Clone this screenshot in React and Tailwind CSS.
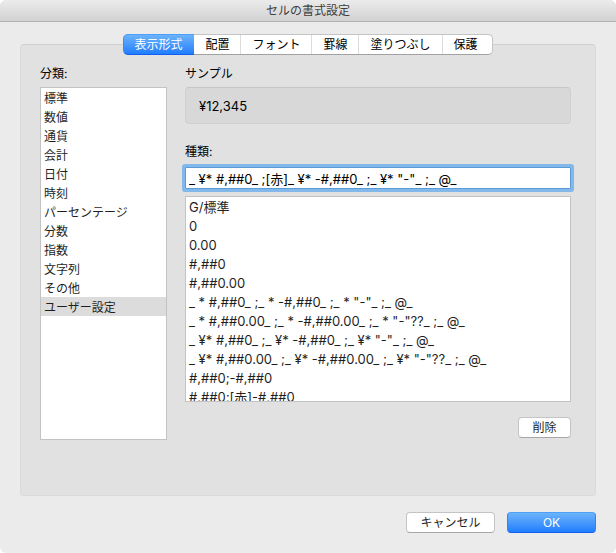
import { useState } from "react";

const TABS = ["表示形式", "配置", "フォント", "罫線", "塗りつぶし", "保護"];

const CATEGORIES = [
  "標準",
  "数値",
  "通貨",
  "会計",
  "日付",
  "時刻",
  "パーセンテージ",
  "分数",
  "指数",
  "文字列",
  "その他",
  "ユーザー設定",
];

const FORMATS = [
  "G/標準",
  "0",
  "0.00",
  "#,##0",
  "#,##0.00",
  '_ * #,##0_ ;_ * -#,##0_ ;_ * "-"_ ;_ @_ ',
  '_ * #,##0.00_ ;_ * -#,##0.00_ ;_ * "-"??_ ;_ @_ ',
  '_ ¥* #,##0_ ;_ ¥* -#,##0_ ;_ ¥* "-"_ ;_ @_ ',
  '_ ¥* #,##0.00_ ;_ ¥* -#,##0.00_ ;_ ¥* "-"??_ ;_ @_ ',
  "#,##0;-#,##0",
  "#,##0;[赤]-#,##0",
];

function TabBar({ active, onSelect }) {
  return (
    <div
      role="tablist"
      aria-label="セルの書式設定"
      className="relative z-10 flex h-[21px] rounded-[5px] border border-[#c4c4c4] border-b-[#a2a2a2] bg-white"
    >
      {TABS.map((tab) => (
        <button
          key={tab}
          type="button"
          role="tab"
          aria-selected={tab === active}
          onClick={() => onSelect(tab)}
          className={
            tab === active
              ? "-my-px -ml-px rounded-l-[5px] border-y border-l border-t-[#4ba0f8] border-b-[#1260f0] border-l-[#3a8cf5] bg-linear-to-b from-[#6cb3fa] to-[#1f7dfe] pr-3 pl-[10px] leading-[19px] text-white"
              : "border-r border-[#dcdcdc] px-[11px] leading-[19px] last:border-r-0 last:pr-[14px]"
          }
        >
          {tab}
        </button>
      ))}
    </div>
  );
}

function ListBox({ labelId, items, selected, onSelect, className }) {
  return (
    <ul
      role="listbox"
      aria-labelledby={labelId}
      className={"overflow-hidden border border-[#c3c3c3] bg-white text-[#1f1f1f] " + className}
    >
      {items.map((item) => (
        <li key={item} role="presentation">
          <button
            type="button"
            role="option"
            aria-selected={item === selected}
            onClick={() => onSelect(item)}
            className={
              "block h-[19px] w-full whitespace-pre pt-px pl-[3px] text-left leading-[19px] " +
              (item === selected ? "bg-[#dcdcdc]" : "")
            }
          >
            {item}
          </button>
        </li>
      ))}
    </ul>
  );
}

function PushButton({ primary, className, children }) {
  return (
    <button
      type="button"
      className={
        "h-[21px] rounded-[4px] border leading-[19px] " +
        (primary
          ? "border-t-[#4ba0f8] border-x-[#2f84f6] border-b-[#1260f0] bg-linear-to-b from-[#6cb3fa] to-[#1f7dfe] text-white "
          : "border-[#c4c4c4] border-b-[#a6a6a6] bg-white text-[#1f1f1f] ") +
        className
      }
    >
      {children}
    </button>
  );
}

export default function App() {
  const [tab, setTab] = useState("表示形式");
  const [category, setCategory] = useState("ユーザー設定");
  const [code, setCode] = useState('_ ¥* #,##0_ ;[赤]_ ¥* -#,##0_ ;_ ¥* "-"_ ;_ @_ ');

  return (
    <div className="bg-white font-[Inter,'Noto_Sans_CJK_JP',sans-serif] text-[12px] leading-[18px] text-black">
      <main className="overflow-hidden rounded-[6px] bg-[#ebebeb] pb-5">
        <header className="h-[22px] border-b border-[#b1b1b1] bg-linear-to-b from-[#ebebeb] to-[#d2d2d2]">
          <h1 className="text-center leading-[22px] text-[#404040]">セルの書式設定</h1>
        </header>

        <div className="px-5 pt-3">
          <div className="flex justify-center">
            <TabBar active={tab} onSelect={setTab} />
          </div>

          <section className="-mt-[11px] flex gap-[18px] rounded-[4px] border border-[#dadada] border-t-[#d0d0d0] bg-[#e1e1e1] pt-5 pr-6 pb-[55px] pl-[19px]">
            <div className="w-[127px]">
              <h2 id="category-label" className="mb-1">
                分類:
              </h2>
              <ListBox
                labelId="category-label"
                items={CATEGORIES}
                selected={category}
                onSelect={setCategory}
                className="h-[353px]"
              />
            </div>

            <div className="min-w-0 flex-1">
              <h2 className="mb-1">サンプル</h2>
              <div className="h-[37px] rounded-[4px] border border-[#d0d0d0] border-t-[#c6c6c6] bg-[#d8d8d8] pl-[13px] text-[13px] leading-[36px]">
                ¥12,345
              </div>

              <label id="type-label" htmlFor="type-code" className="mt-[19px] mb-[6px] block">
                種類:
              </label>
              <input
                id="type-code"
                type="text"
                value={code}
                onChange={(event) => setCode(event.target.value)}
                className="block h-[22px] w-full rounded-[1px] border border-[#5b9bd8] bg-white px-[3px] text-[13px] ring-3 ring-[#83b8ea] outline-none"
              />
              <ListBox
                labelId="type-label"
                items={FORMATS}
                selected={null}
                onSelect={setCode}
                className="mt-[7px] h-[206px] text-[13px]"
              />
              <div className="mt-[15px] -mb-[37px] flex justify-end">
                <PushButton className="w-[53px]">削除</PushButton>
              </div>
            </div>
          </section>

          <footer className="mt-4 flex justify-end gap-3">
            <PushButton className="w-[89px]">キャンセル</PushButton>
            <PushButton primary className="w-[89px]">
              OK
            </PushButton>
          </footer>
        </div>
      </main>
    </div>
  );
}
